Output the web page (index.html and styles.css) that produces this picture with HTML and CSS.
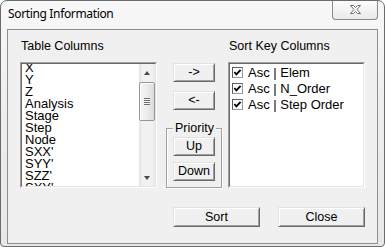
FILE: index.html
```html
<!DOCTYPE html>
<html>
<head>
<meta charset="utf-8">
<link rel="stylesheet" href="styles.css">
</head>
<body>
<div class="window">
  <div class="titlebar">
    <span class="title">Sorting Information</span>
    <div class="close">
      <svg width="11" height="9" viewBox="0 0 11 9"><path d="M0.5 0.5h3l2 2l2-2h3l-3.5 4l3.5 4h-3l-2-2l-2 2h-3l3.5-4z" fill="#fff" stroke="#6f6f6f" stroke-width="1"/></svg>
    </div>
  </div>
  <div class="client">
    <div class="main">
      <div class="col col-left">
        <div class="label">Table Columns</div>
        <div class="listbox">
          <div class="listbox-in">
            <div class="items">
              <div class="item">X</div>
              <div class="item">Y</div>
              <div class="item">Z</div>
              <div class="item">Analysis</div>
              <div class="item">Stage</div>
              <div class="item">Step</div>
              <div class="item">Node</div>
              <div class="item">SXX'</div>
              <div class="item">SYY'</div>
              <div class="item">SZZ'</div>
              <div class="item">SXY'</div>
            </div>
            <div class="scrollbar">
              <div class="sb-btn"><span class="arrow-up"></span></div>
              <div class="sb-track">
                <div class="sb-thumb"><span class="grip"></span></div>
              </div>
              <div class="sb-btn"><span class="arrow-down"></span></div>
            </div>
          </div>
        </div>
      </div>
      <div class="mid">
        <button class="btn btn-arrow first">-&gt;</button>
        <button class="btn btn-arrow second">&lt;-</button>
        <fieldset class="group">
          <legend class="group-label">Priority</legend>
          <button class="btn btn-arrow">Up</button>
          <button class="btn btn-arrow">Down</button>
        </fieldset>
      </div>
      <div class="col col-right">
        <div class="label">Sort Key Columns</div>
        <div class="listbox">
          <div class="listbox-in">
            <div class="checks">
              <div class="check-row"><span class="checkbox"><svg width="9" height="9" viewBox="0 0 9 9"><polyline points="1.3,4 3.4,6.3 7.6,1.8" fill="none" stroke="#000" stroke-width="1.8"/></svg></span><span>Asc | Elem</span></div>
              <div class="check-row"><span class="checkbox"><svg width="9" height="9" viewBox="0 0 9 9"><polyline points="1.3,4 3.4,6.3 7.6,1.8" fill="none" stroke="#000" stroke-width="1.8"/></svg></span><span>Asc | N_Order</span></div>
              <div class="check-row"><span class="checkbox"><svg width="9" height="9" viewBox="0 0 9 9"><polyline points="1.3,4 3.4,6.3 7.6,1.8" fill="none" stroke="#000" stroke-width="1.8"/></svg></span><span>Asc | Step Order</span></div>
            </div>
          </div>
        </div>
      </div>
    </div>
    <div class="footer">
      <button class="btn btn-wide">Sort</button>
      <button class="btn btn-wide">Close</button>
    </div>
  </div>
</div>
</body>
</html>
```
FILE: styles.css
```css
* { box-sizing: border-box; }
html, body { margin: 0; padding: 0; }
body {
  width: 385px;
  height: 247px;
  overflow: hidden;
  background: #ffffff;
  font-family: "Liberation Sans", Arial, sans-serif;
  color: #000;
}
.window {
  width: 385px;
  height: 247px;
  border: 1px solid #6b6b6b;
  border-radius: 7px 7px 4px 4px;
  background: linear-gradient(180deg, #f8f8f8 0%, #eeeeee 45%, #e8e8e8 100%);
  display: flex;
  flex-direction: column;
  overflow: hidden;
}
.titlebar {
  height: 28px;
  flex: none;
  display: flex;
  align-items: flex-start;
  padding-left: 7px;
}
.title {
  font-family: "Noto Sans", "Open Sans", sans-serif;
  font-size: 12px;
  line-height: 16px;
  margin-top: 5px;
  letter-spacing: -0.35px;
  color: #000;
}
.close {
  margin-left: auto;
  margin-right: 6px;
  width: 46px;
  height: 19px;
  border: 1px solid #8a8a8a;
  border-top: none;
  border-radius: 0 0 4px 4px;
  background: linear-gradient(180deg, #fdfdfd, #e9e9e9);
  display: flex;
  align-items: center;
  justify-content: center;
  padding-bottom: 1px;
}
.client {
  flex: 1;
  margin: 0 6px 2px;
  border: 1px solid #8e8f8f;
  background: #f0f0f0;
  padding: 9px 12px 0;
  display: flex;
  flex-direction: column;
}
.main {
  display: flex;
  align-items: flex-start;
}
.col-left { width: 137px; }
.col-right { width: 137px; margin-left: 6px; }
.label {
  font-size: 12.5px;
  line-height: 15px;
  height: 15px;
  margin-bottom: 8px;
  padding-left: 1px;
  white-space: nowrap;
}
.listbox {
  height: 126px;
  border: 1px solid;
  border-color: #a0a0a0 #ffffff #ffffff #a0a0a0;
}
.listbox-in {
  height: 100%;
  border: 1px solid;
  border-color: #696969 #e3e3e3 #e3e3e3 #696969;
  background: #fff;
  display: flex;
  overflow: hidden;
}
.items {
  flex: 1;
  overflow: hidden;
  padding-left: 3px;
}
.item {
  font-size: 13px;
  line-height: 12px;
  height: 12px;
  white-space: nowrap;
}
.item:first-child { margin-top: -2px; }
.scrollbar {
  width: 16px;
  flex: none;
  display: flex;
  flex-direction: column;
  background: linear-gradient(90deg, #e2e2e2 0%, #f1f1f1 20%, #f1f1f1 80%, #e8e8e8 100%);
}
.sb-btn {
  height: 17px;
  flex: none;
  display: flex;
  align-items: center;
  justify-content: center;
}
.arrow-up {
  width: 0; height: 0;
  border-left: 3.5px solid transparent;
  border-right: 3.5px solid transparent;
  border-bottom: 4px solid #4a4a4a;
}
.arrow-down {
  width: 0; height: 0;
  border-left: 3.5px solid transparent;
  border-right: 3.5px solid transparent;
  border-top: 4px solid #4a4a4a;
}
.sb-track {
  flex: 1;
}
.sb-thumb {
  height: 39px;
  margin-top: 1px;
  border: 1px solid #979797;
  border-radius: 2px;
  background: linear-gradient(90deg, #f6f6f6 0%, #ececec 50%, #dcdcdc 100%);
  box-shadow: inset 1px 1px 0 #ffffff;
  display: flex;
  align-items: center;
  justify-content: center;
}
.grip {
  width: 6px;
  height: 7px;
  background: repeating-linear-gradient(180deg, #6e6e6e 0, #6e6e6e 1px, #f4f4f4 1px, #f4f4f4 2px);
}
.mid {
  width: 56px;
  margin-left: 9px;
  padding-top: 23px;
  display: flex;
  flex-direction: column;
  align-items: center;
}
.btn {
  font-family: "Liberation Sans", Arial, sans-serif;
  font-size: 12.5px;
  color: #000;
  background: #f0f0f0;
  border: 1px solid;
  border-color: #e3e3e3 #696969 #696969 #e3e3e3;
  box-shadow: inset 1px 1px 0 #ffffff, inset -1px -1px 0 #a0a0a0;
  padding: 0;
  margin: 0;
  display: block;
  line-height: 15px;
}
.btn-arrow {
  width: 42px;
  height: 19px;
}
.first { margin-top: 1px; }
.second { margin-top: 9px; }
.group {
  width: 56px;
  margin: 12px 0 0;
  padding: 3px 6px 6px;
  border: 1px solid #a0a0a0;
  box-shadow: inset 1px 1px 0 #ffffff, 1px 1px 0 #ffffff;
  display: flex;
  flex-direction: column;
  gap: 6px;
  min-width: 0;
}
.group-label {
  font-size: 12.5px;
  line-height: 12px;
  padding: 0 2px;
  margin-left: 0;
  background: #f0f0f0;
}
.checks {
  padding: 1px 0 0 2px;
}
.check-row {
  height: 16px;
  display: flex;
  align-items: flex-start;
  font-size: 13px;
  line-height: 16px;
  white-space: nowrap;
}
.checkbox {
  width: 11px;
  height: 11px;
  margin-top: 2px;
  margin-right: 5px;
  border: 1px solid;
  border-color: #5c5c5c #9a9a9a #9a9a9a #5c5c5c;
  background: #fff;
  display: flex;
  align-items: center;
  justify-content: center;
  flex: none;
}
.footer {
  display: flex;
  justify-content: flex-end;
  gap: 18px;
  margin-top: 19px;
}
.btn-wide {
  width: 87px;
  height: 20px;
}
```
